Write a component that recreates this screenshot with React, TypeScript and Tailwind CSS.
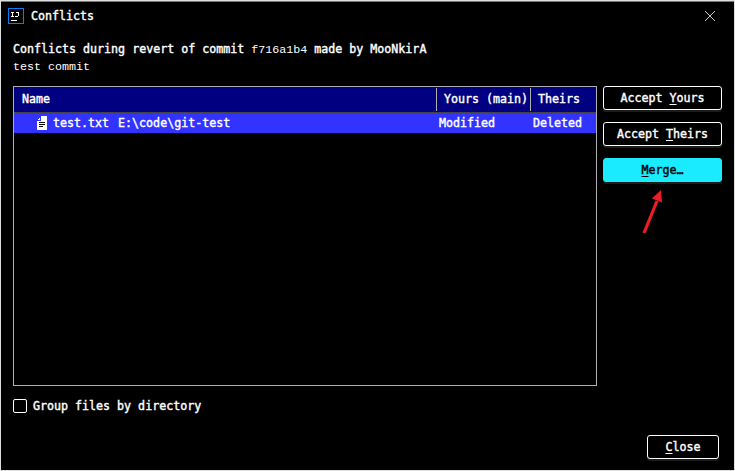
import type { ReactNode } from "react";

function Button({ children, primary = false, className = "" }: { children: ReactNode; primary?: boolean; className?: string }) {
  return (
    <button
      className={`h-6 shrink-0 rounded-[3px] border text-center leading-[22px] shadow-[0_2px_0_#1c1c1c] ${
        primary ? "border-[#1aebff] bg-[#1aebff] text-black" : "border-white bg-black text-white"
      } ${className}`}
    >
      {children}
    </button>
  );
}

function Key({ children }: { children: string }) {
  return <span className="underline decoration-1 underline-offset-[2px]">{children}</span>;
}

function AppLogo() {
  return (
    <svg width="16" height="16" viewBox="0 0 16 16" fill="none" shapeRendering="crispEdges">
      <rect x=".5" y=".5" width="15" height="15" fill="#000" stroke="#087cfa" />
      <path d="M3 4.5h3M4.5 4v5M3 8.5h3M8 4.5h3M10.5 4v4M7 8.5h3M3 12.5h6" stroke="#fff" />
    </svg>
  );
}

function FileIcon() {
  return (
    <svg width="10" height="14" viewBox="0 0 10 14" shapeRendering="crispEdges">
      <path d="M4 0h6v14H0V5h4z" fill="#fff" />
      <path d="M0 4l3-3v3z" fill="#fff" />
      <path d="M2 6.5h6M2 8.5h6M2 10.5h4" stroke="#000" />
    </svg>
  );
}

export default function App() {
  return (
    <div className="relative flex h-[471px] w-[735px] flex-col border border-[#dedede] bg-black font-['DejaVu_Sans_Mono',monospace] text-[11.65px] leading-[18px] text-white [-webkit-text-stroke:0.4px_currentColor]">
      <header className="flex h-[31px] shrink-0 items-start border-t border-[#7d6bb0] pl-[7px] pr-[18px]">
        <div className="mt-[6px]"><AppLogo /></div>
        <h1 className="ml-[7px] mt-[5px]">Conflicts</h1>
        <svg className="ml-auto mt-[8px]" width="12" height="12" viewBox="0 0 12 12">
          <path d="M1 1l10 10M11 1L1 11" stroke="#c8c8c8" strokeWidth="1" />
        </svg>
      </header>
      <main className="flex flex-1 flex-col pl-3 pr-3">
        <div className="mt-[8px] h-[18px] whitespace-pre">
          Conflicts during revert of commit <code className="font-['Liberation_Mono',monospace] text-[11.667px] [-webkit-text-stroke:0]">f716a1b4</code> made by MooNkirA
        </div>
        <div className="h-[18px] font-['Liberation_Mono',monospace] text-[11.667px] leading-[18px] [-webkit-text-stroke:0]">test commit</div>
        <div className="mt-[10px] flex h-[300px] gap-[6px]">
          <section className="w-[584px] border border-[#afafaf]">
            <div className="flex h-[26px] items-start border-b border-[#444] bg-[#000080] leading-[22px]">
              <div className="mt-px w-[422px] pl-2">Name</div>
              <div className="mt-px h-[23px] w-[94px] whitespace-nowrap border-l border-[#afafaf] pl-[7px]">Yours (main)</div>
              <div className="mt-px h-[23px] flex-1 border-l border-[#afafaf] pl-[7px]">Theirs</div>
            </div>
            <div className="flex h-5 items-start bg-[#3333ff] leading-5">
              <div className="flex w-[422px] pl-[23px]">
                <div className="mt-[3px]"><FileIcon /></div>
                <span className="ml-[6px]">test.txt</span>
                <span className="ml-[9px]">E:\code\git-test</span>
              </div>
              <div className="w-[94px] pl-[3px]">Modified</div>
              <div className="pl-[3px]">Deleted</div>
            </div>
          </section>
          <aside className="flex w-[119px] flex-col gap-3">
            <Button>Accept <Key>Y</Key>ours</Button>
            <Button>Accept <Key>T</Key>heirs</Button>
            <Button primary><Key>M</Key>erge…</Button>
          </aside>
        </div>
        <label className="mt-[13px] flex h-[14px] items-center">
          <span className="size-[14px] rounded-[2px] border border-white" />
          <span className="ml-[6px]">Group files by directory</span>
        </label>
        <footer className="mt-[22px] flex justify-end pr-[3px]">
          <Button className="w-[72px]"><Key>C</Key>lose</Button>
        </footer>
      </main>
      <svg className="absolute left-[640px] top-[188px]" width="26" height="48" viewBox="0 0 26 48">
        <path d="M3 44L16 12" stroke="#ed1c24" strokeWidth="3.2" />
        <path d="M20 1L21 13.5L16 11.5L11 9.5Z" fill="#ed1c24" />
      </svg>
    </div>
  );
}
